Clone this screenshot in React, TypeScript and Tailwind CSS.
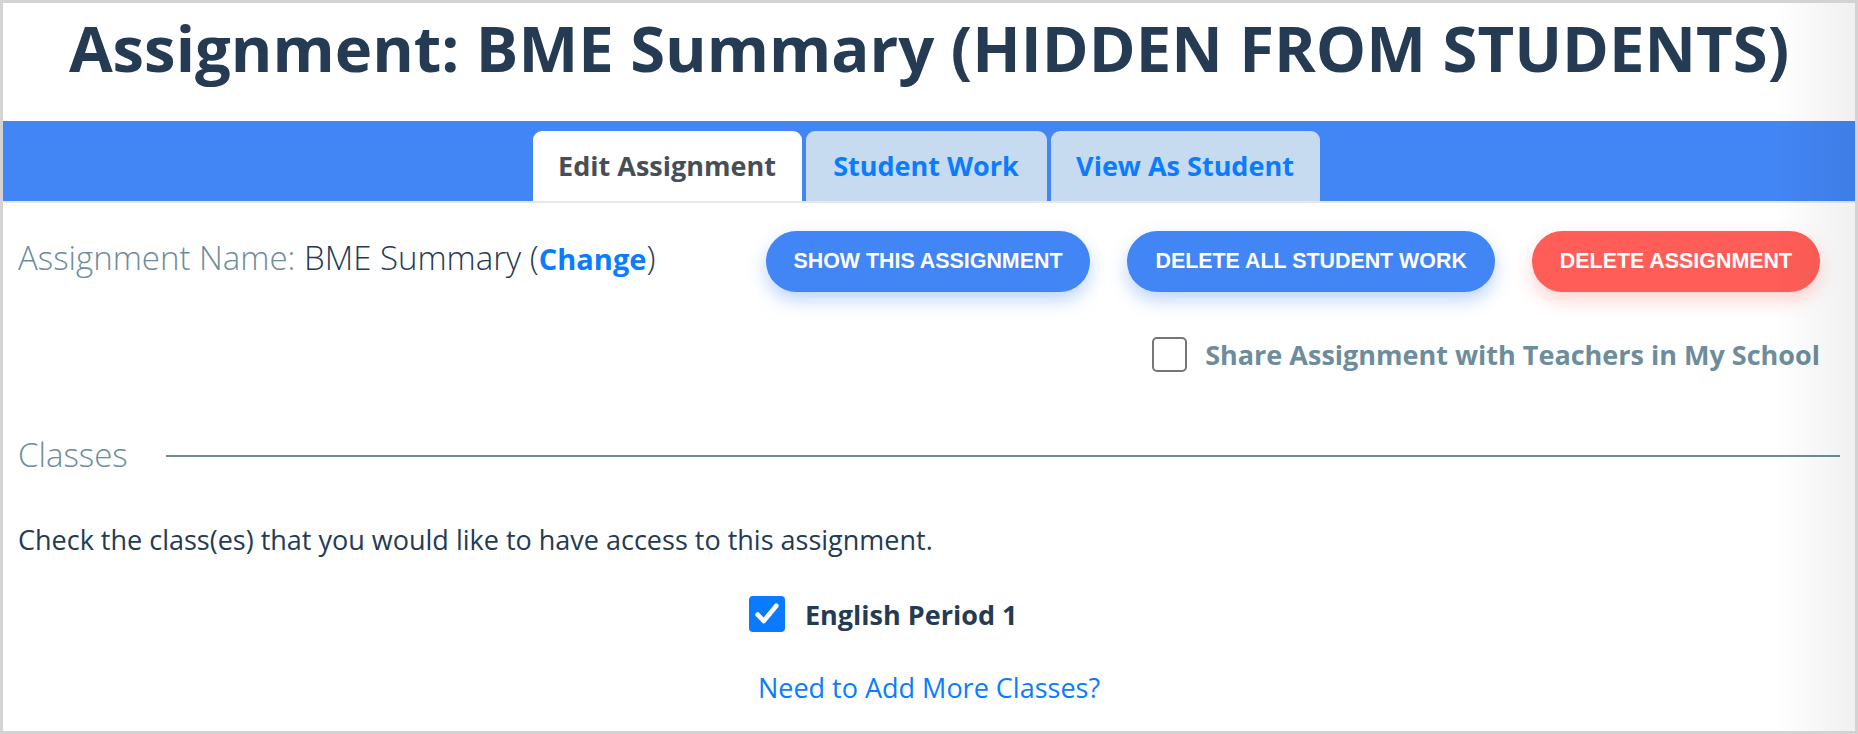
import React from "react";

const OS = { fontFamily: '"Open Sans", "Noto Sans", sans-serif' };

function Tab({ label, active, width }: { label: string; active?: boolean; width: string }) {
  return (
    <div
      className={`${width} h-[70px] rounded-t-[9px] flex items-center justify-center text-[27px] font-bold ${
        active ? "bg-white text-[#474e56]" : "bg-[#c6daf0] text-[#0a7cff]"
      }`}
    >
      {label}
    </div>
  );
}

function PillButton({ label, red }: { label: string; red?: boolean }) {
  return (
    <button
      className={`h-[61px] px-[28px] rounded-full text-white font-bold text-[21.4px] ${
        red
          ? "bg-[#ff5d57] shadow-[0_8px_18px_rgba(255,93,87,0.28)]"
          : "bg-[#4285f4] shadow-[0_8px_18px_rgba(66,133,244,0.35)]"
      }`}
      style={{ fontFamily: '"Liberation Sans", Arial, sans-serif' }}
    >
      {label}
    </button>
  );
}

export default function App() {
  return (
    <div
      className="relative w-[1858px] h-[734px] overflow-hidden border-[3px] border-[#d3d3d3] bg-white text-[#243b53]"
      style={OS}
    >
      {/* Title */}
      <div className="h-[118px] pt-[13px] text-center">
        <h1 className="text-[63.4px] font-bold leading-none text-[#243b53]">
          Assignment: BME Summary (HIDDEN FROM STUDENTS)
        </h1>
      </div>

      {/* Tab bar */}
      <div className="h-[80px] bg-[#4285f4] flex items-end justify-center gap-[4px] pr-[6px]">
        <Tab label="Edit Assignment" active width="w-[269px]" />
        <Tab label="Student Work" width="w-[241px]" />
        <Tab label="View As Student" width="w-[269px]" />
      </div>
      <div className="h-[2px] bg-[#e6e8ea]" />

      {/* Content */}
      <div className="pl-[15px] pr-[15px]">
        <div className="flex items-start justify-between mt-[28px]">
          <div className="pt-[10px] text-[33px] leading-none font-light whitespace-nowrap">
            <span className="text-[#6d8c9c]">Assignment Name: </span>
            <span className="text-[#243b53]">BME Summary</span>
            <span className="text-[#243b53]"> (</span>
            <span className="text-[#0a7cff] font-bold text-[29px]">Change</span>
            <span className="text-[#243b53]">)</span>
          </div>
          <div className="flex gap-[37px] pr-[20px]">
            <PillButton label="SHOW THIS ASSIGNMENT" />
            <PillButton label="DELETE ALL STUDENT WORK" />
            <PillButton label="DELETE ASSIGNMENT" red />
          </div>
        </div>

        <div className="flex justify-end items-center mt-[45px] pr-[20px] gap-[18px]">
          <div className="w-[35px] h-[35px] rounded-[5px] border-2 border-[#767676] bg-white" />
          <span className="text-[27px] font-bold text-[#6d8c9c] leading-none">
            Share Assignment with Teachers in My School
          </span>
        </div>

        <div className="flex items-center mt-[66px] gap-[38px]">
          <span className="text-[33px] font-light text-[#6d8c9c] leading-none">Classes</span>
          <div className="flex-1 h-[2px] mt-[3px] bg-[#6d8c9c]" />
        </div>

        <p className="mt-[55px] text-[27px] leading-none text-[#243b53]">
          Check the class(es) that you would like to have access to this assignment.
        </p>

        <div className="w-[360px] mx-auto mt-[43px] flex items-center gap-[20px]">
          <div className="w-[36px] h-[36px] rounded-[4px] bg-[#0a7bff] flex items-center justify-center">
            <svg width="28" height="28" viewBox="0 0 24 24" fill="none">
              <path d="M4 12.5l5.2 5.5L20 5" stroke="white" strokeWidth="4" strokeLinecap="round" strokeLinejoin="round" />
            </svg>
          </div>
          <span className="text-[27px] font-bold text-[#243b53] leading-none">English Period 1</span>
        </div>

        <div className="mt-[42px] text-center">
          <span className="text-[27px] text-[#0a7cff] leading-none">Need to Add More Classes?</span>
        </div>
      </div>

      {/* right-edge shading */}
      <div className="pointer-events-none absolute top-0 right-0 w-[80px] h-full bg-gradient-to-r from-transparent to-[rgba(0,0,0,0.06)]" />
    </div>
  );
}
